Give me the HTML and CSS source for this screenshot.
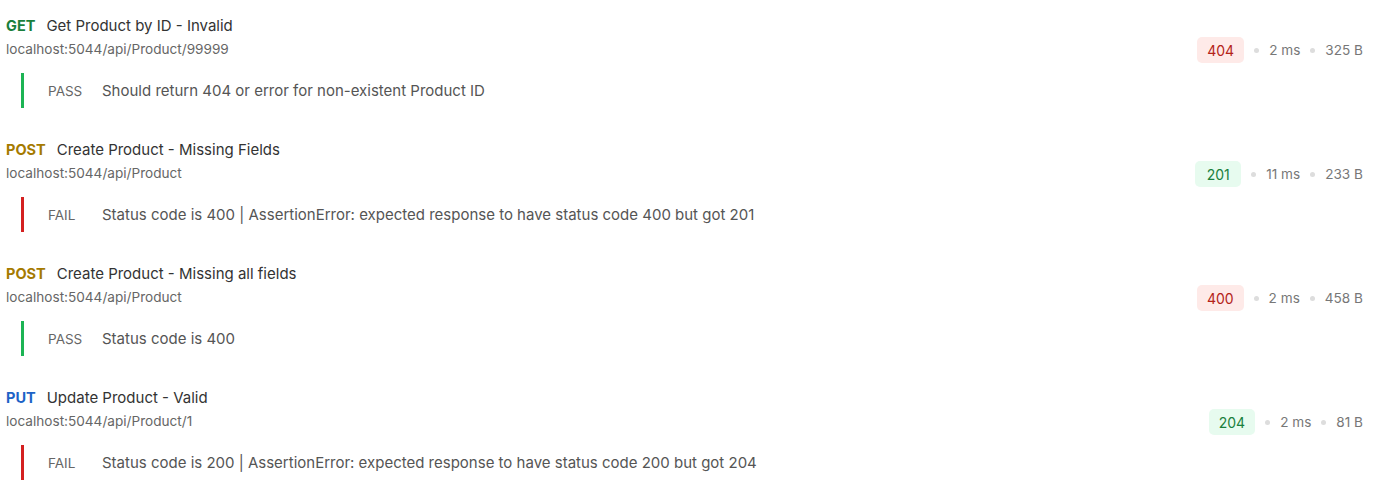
FILE: index.html
```html
<!DOCTYPE html>
<html lang="en">
<head>
<meta charset="utf-8">
<title>Run results</title>
<link rel="stylesheet" href="styles.css">
</head>
<body>
<div class="list">
  <div class="req">
    <div class="head">
      <div class="left">
        <div class="title"><span class="method get">GET</span><span class="name">Get Product by ID - Invalid</span></div>
        <div class="url">localhost:5044/api/Product/99999</div>
      </div>
      <div class="meta">
        <span class="badge err">404</span><span class="dot"></span><span class="m">2 ms</span><span class="dot"></span><span class="m">325 B</span>
      </div>
    </div>
    <div class="test pass"><span class="res">PASS</span><span class="msg">Should return 404 or error for non-existent Product ID</span></div>
  </div>

  <div class="req">
    <div class="head">
      <div class="left">
        <div class="title"><span class="method post">POST</span><span class="name">Create Product - Missing Fields</span></div>
        <div class="url">localhost:5044/api/Product</div>
      </div>
      <div class="meta">
        <span class="badge ok">201</span><span class="dot"></span><span class="m">11 ms</span><span class="dot"></span><span class="m">233 B</span>
      </div>
    </div>
    <div class="test fail"><span class="res">FAIL</span><span class="msg">Status code is 400 | AssertionError: expected response to have status code 400 but got 201</span></div>
  </div>

  <div class="req">
    <div class="head">
      <div class="left">
        <div class="title"><span class="method post">POST</span><span class="name">Create Product - Missing all fields</span></div>
        <div class="url">localhost:5044/api/Product</div>
      </div>
      <div class="meta">
        <span class="badge err">400</span><span class="dot"></span><span class="m">2 ms</span><span class="dot"></span><span class="m">458 B</span>
      </div>
    </div>
    <div class="test pass"><span class="res">PASS</span><span class="msg">Status code is 400</span></div>
  </div>

  <div class="req">
    <div class="head">
      <div class="left">
        <div class="title"><span class="method put">PUT</span><span class="name">Update Product - Valid</span></div>
        <div class="url">localhost:5044/api/Product/1</div>
      </div>
      <div class="meta">
        <span class="badge ok">204</span><span class="dot"></span><span class="m">2 ms</span><span class="dot"></span><span class="m">81 B</span>
      </div>
    </div>
    <div class="test fail"><span class="res">FAIL</span><span class="msg">Status code is 200 | AssertionError: expected response to have status code 200 but got 204</span></div>
  </div>
</div>
</body>
</html>
```
FILE: styles.css
```css
html, body {
  margin: 0;
  padding: 0;
  background: #ffffff;
}
body {
  font-family: Inter, "Noto Sans", sans-serif;
  color: #333333;
}
.list {
  padding-top: 16px;
}
.req {
  padding: 0 17px 32px 6px;
}
.head {
  display: flex;
  justify-content: space-between;
  align-items: flex-start;
}
.title {
  font-size: 15px;
  line-height: 20px;
  display: flex;
  gap: 11px;
}
.method {
  font-weight: 700;
  font-size: 14.5px;
}
.get { color: #1a7f3c; }
.post { color: #a57a00; }
.put { color: #1d63c6; }
.name { color: #333333; }
.url {
  margin-top: 3px;
  font-size: 13.6px;
  line-height: 20px;
  color: #666666;
}
.meta {
  margin-top: 21px;
  display: flex;
  align-items: center;
  gap: 10px;
  font-size: 13.6px;
  color: #777777;
}
.badge {
  display: inline-flex;
  align-items: center;
  justify-content: center;
  height: 26px;
  min-width: 46px;
  padding: 0 10px;
  box-sizing: border-box;
  border-radius: 5px;
  font-size: 14px;
}
.badge.err { background: #feeae8; color: #b42318; }
.badge.ok { background: #e7fbef; color: #19803d; }
.dot {
  width: 5px;
  height: 5px;
  border-radius: 50%;
  background: #dddddd;
}
.test {
  margin: 10px 0 0 15px;
  height: 35px;
  display: flex;
  align-items: center;
  border-left: 3px solid;
  padding-left: 24px;
}
.test.pass { border-left-color: #1cb454; }
.test.fail { border-left-color: #d42020; }
.res {
  width: 54px;
  font-size: 13.5px;
  color: #666666;
}
.msg {
  font-size: 15px;
  color: #555555;
}
```
